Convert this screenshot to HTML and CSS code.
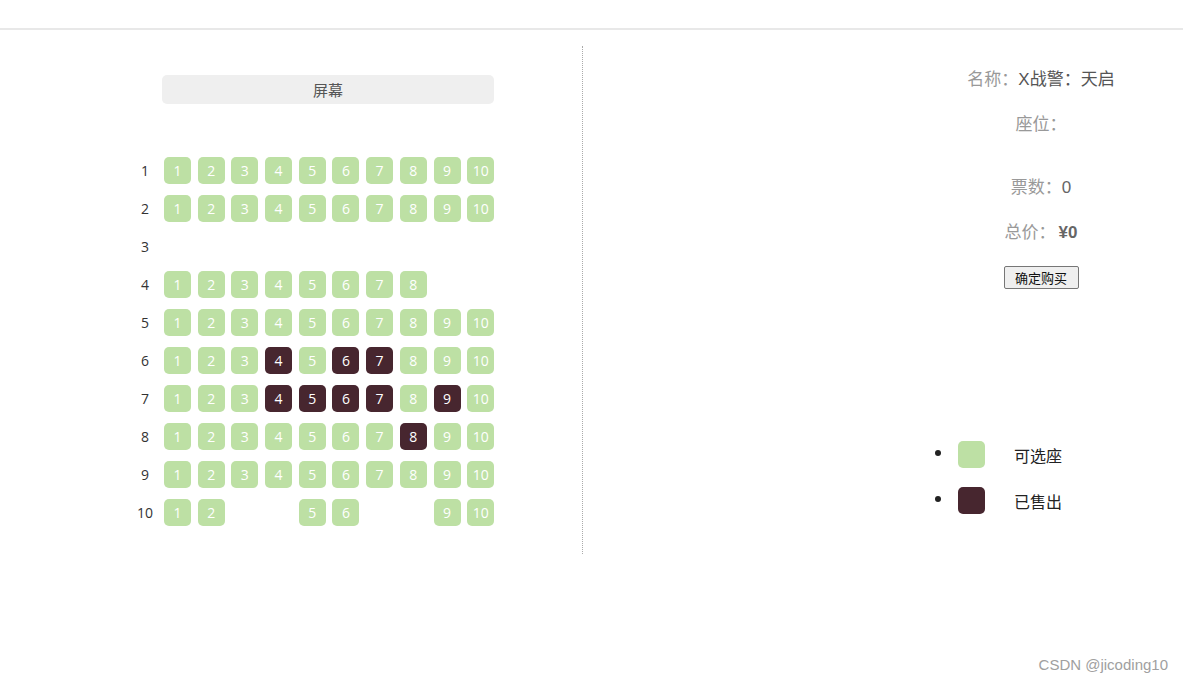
FILE: index.html
```html
<!DOCTYPE html>
<html lang="zh">
<head>
<meta charset="utf-8">
<title>选座</title>
<link rel="stylesheet" href="styles.css">
</head>
<body>
<div class="topbar"></div>
<div class="main">
  <div class="hall">
    <div class="screen">屏幕</div>
    <div class="rows">
      <div class="row"><span class="rl">1</span><div class="seats"><span class="seat">1</span><span class="seat">2</span><span class="seat">3</span><span class="seat">4</span><span class="seat">5</span><span class="seat">6</span><span class="seat">7</span><span class="seat">8</span><span class="seat">9</span><span class="seat">10</span></div></div>
      <div class="row"><span class="rl">2</span><div class="seats"><span class="seat">1</span><span class="seat">2</span><span class="seat">3</span><span class="seat">4</span><span class="seat">5</span><span class="seat">6</span><span class="seat">7</span><span class="seat">8</span><span class="seat">9</span><span class="seat">10</span></div></div>
      <div class="row"><span class="rl">3</span><div class="seats"></div></div>
      <div class="row"><span class="rl">4</span><div class="seats"><span class="seat">1</span><span class="seat">2</span><span class="seat">3</span><span class="seat">4</span><span class="seat">5</span><span class="seat">6</span><span class="seat">7</span><span class="seat">8</span></div></div>
      <div class="row"><span class="rl">5</span><div class="seats"><span class="seat">1</span><span class="seat">2</span><span class="seat">3</span><span class="seat">4</span><span class="seat">5</span><span class="seat">6</span><span class="seat">7</span><span class="seat">8</span><span class="seat">9</span><span class="seat">10</span></div></div>
      <div class="row"><span class="rl">6</span><div class="seats"><span class="seat">1</span><span class="seat">2</span><span class="seat">3</span><span class="seat sold">4</span><span class="seat">5</span><span class="seat sold">6</span><span class="seat sold">7</span><span class="seat">8</span><span class="seat">9</span><span class="seat">10</span></div></div>
      <div class="row"><span class="rl">7</span><div class="seats"><span class="seat">1</span><span class="seat">2</span><span class="seat">3</span><span class="seat sold">4</span><span class="seat sold">5</span><span class="seat sold">6</span><span class="seat sold">7</span><span class="seat">8</span><span class="seat sold">9</span><span class="seat">10</span></div></div>
      <div class="row"><span class="rl">8</span><div class="seats"><span class="seat">1</span><span class="seat">2</span><span class="seat">3</span><span class="seat">4</span><span class="seat">5</span><span class="seat">6</span><span class="seat">7</span><span class="seat sold">8</span><span class="seat">9</span><span class="seat">10</span></div></div>
      <div class="row"><span class="rl">9</span><div class="seats"><span class="seat">1</span><span class="seat">2</span><span class="seat">3</span><span class="seat">4</span><span class="seat">5</span><span class="seat">6</span><span class="seat">7</span><span class="seat">8</span><span class="seat">9</span><span class="seat">10</span></div></div>
      <div class="row"><span class="rl">10</span><div class="seats"><span class="seat">1</span><span class="seat">2</span><span class="seat gap"></span><span class="seat gap"></span><span class="seat">5</span><span class="seat">6</span><span class="seat gap"></span><span class="seat gap"></span><span class="seat">9</span><span class="seat">10</span></div></div>
    </div>
  </div>
  <div class="side">
    <div class="info">
      <p class="line l-name"><span class="lab">名称：</span><span class="val">X战警：天启</span></p>
      <p class="line l-seat"><span class="lab">座位：</span></p>
      <p class="line l-count"><span class="lab">票数：</span><span class="num">0</span></p>
      <p class="line l-price"><span class="lab">总价：</span><b class="num yen">¥0</b></p>
      <button class="buy">确定购买</button>
    </div>
    <ul class="legend">
      <li><span class="sq free"></span><span class="lt">可选座</span></li>
      <li><span class="sq taken"></span><span class="lt">已售出</span></li>
    </ul>
  </div>
</div>
<div class="mark">CSDN @jicoding10</div>
</body>
</html>
```

FILE: styles.css
```css
html, body {
  margin: 0;
  padding: 0;
  background: #fff;
}
body {
  font-family: "Open Sans", "Noto Sans CJK SC", sans-serif;
  color: #333;
  width: 1183px;
  height: 682px;
  position: relative;
  overflow: hidden;
}
.topbar {
  height: 28px;
  border-bottom: 2px solid #e8e8e8;
}
.main {
  display: flex;
  margin-top: 16px;
}
.hall {
  width: 583px;
  height: 508px;
  border-right: 1px dotted #aaa;
  box-sizing: border-box;
  padding-top: 29px;
}
.screen {
  margin-left: 162px;
  width: 332px;
  height: 29px;
  line-height: 29px;
  background: #efefef;
  border-radius: 5px;
  text-align: center;
  font-family: "Noto Sans CJK SC", sans-serif;
  font-size: 15px;
  color: #555;
}
.rows {
  margin-top: 47px;
  padding-left: 131px;
}
.row {
  display: flex;
  align-items: center;
  height: 38px;
}
.rl {
  width: 28px;
  text-align: center;
  font-size: 14px;
  color: #333;
}
.seats {
  display: flex;
  gap: 6.7px;
  margin-left: 5px;
}
.seat {
  width: 27px;
  height: 27px;
  border-radius: 5px;
  background: #bde0a4;
  color: #fff;
  font-size: 14px;
  line-height: 27px;
  text-align: center;
}
.seat.sold {
  background: #47262f;
}
.seat.gap {
  visibility: hidden;
}
.side {
  flex: 1;
  padding-left: 358px;
}
.info {
  width: 200px;
  text-align: center;
  font-family: "Liberation Sans", "Noto Sans CJK SC", sans-serif;
  font-size: 17px;
}
.line {
  margin: 0;
  height: 24px;
  line-height: 24px;
}
.l-name { margin-top: 22px; }
.l-seat { margin-top: 21px; }
.l-count { margin-top: 39px; }
.l-price { margin-top: 21px; }
.lab { color: #999; }
.val { color: #555; }
.num { color: #666; }
.yen { margin-left: 3px; }
.buy {
  margin-top: 21px;
  font-family: "Noto Sans CJK SC", sans-serif;
  font-size: 13px;
  height: 23px;
  width: 75px;
  padding: 0;
  background: #efefef;
  border: 1px solid #767676;
  border-radius: 2px;
  color: #111;
  line-height: 20px;
}
.legend {
  margin: 140px 0 0 0;
  padding-left: 13px;
  font-family: "Noto Sans CJK SC", sans-serif;
  font-size: 16px;
  color: #222;
}
.legend li {
  height: 46px;
  line-height: 46px;
}
.sq {
  display: inline-block;
  width: 27px;
  height: 27px;
  border-radius: 5px;
  vertical-align: middle;
  margin-left: 4px;
}
.sq.free { background: #bde0a4; }
.sq.taken { background: #47262f; }
.lt {
  margin-left: 29px;
  vertical-align: middle;
}
.mark {
  position: absolute;
  right: 15px;
  bottom: 9px;
  font-family: "Liberation Sans", sans-serif;
  font-size: 15px;
  color: #a0a0a0;
}
```
